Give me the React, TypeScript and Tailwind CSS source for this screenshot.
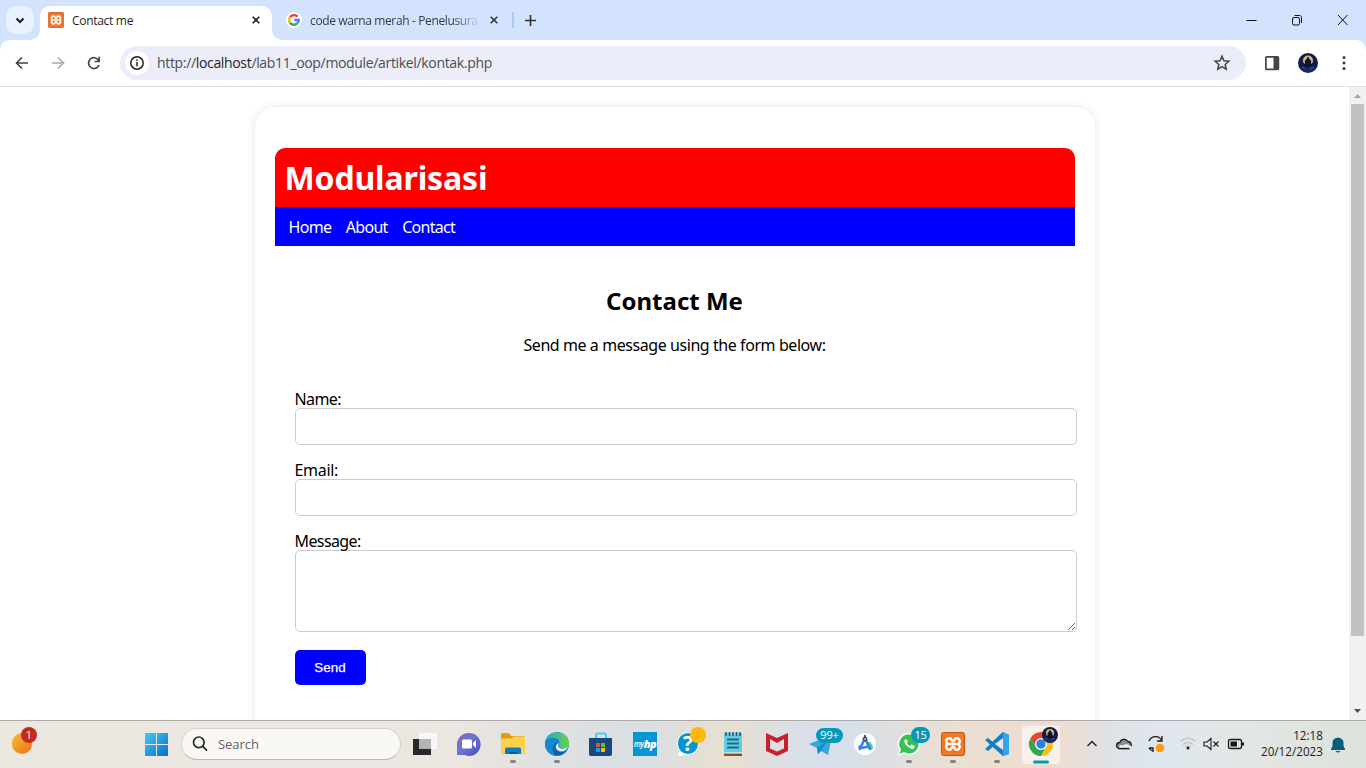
import React from "react";

type Children = { children?: React.ReactNode };

function XamppIcon({ className = "" }: { className?: string }) {
  return (
    <svg viewBox="0 0 24 24" className={className}>
      <rect x="0.5" y="0.5" width="23" height="23" rx="2" fill="#f37623" stroke="#b4551a" />
      <path d="M9.500 6.500a3 3 0 0 0-4.300 3c0 1.200.6 2 1.600 2.500-1 .5-1.600 1.300-1.600 2.500a3 3 0 0 0 4.300 3M14.500 6.500a3 3 0 0 1 4.300 3c0 1.200-.6 2-1.600 2.500 1 .5 1.600 1.300 1.600 2.500a3 3 0 0 1-4.300 3M8.500 12h7M9.500 6.500c1.300.6.8 2.700 2.500 2.700s1.200-2.100 2.500-2.700M9.500 17.500c1.300-.6.8-2.700 2.500-2.700s1.200 2.100 2.500 2.700" fill="none" stroke="#fff" strokeWidth="2.500" strokeLinecap="round" strokeLinejoin="round" />
    </svg>
  );
}

function Avatar({ className = "" }: { className?: string }) {
  return (
    <svg viewBox="0 0 20 20" className={className}>
      <circle cx="10" cy="10" r="10" fill="#111c4a" />
      <circle cx="10" cy="7.500" r="5" fill="#d8b982" />
      <path d="M8.500 6l1.500-2.500 1.500 2.500 1.800 2-.3 2 2.500 4h-11l2.500-4-.3-2 1.800-2z" fill="#0d1230" />
      <path d="M1.500 14l4-1.500 4 2.500 4-2 4.500 1.500a10 10 0 0 1-16 1z" fill="#17295f" />
      <path d="M4 14.500l3 .8m5 .5l4-1.200" stroke="#4d6aa6" strokeWidth=".7" />
    </svg>
  );
}

function GoogleIcon() {
  return (
    <svg viewBox="0 0 16 16" className="h-4 w-4">
      <circle cx="8" cy="8" r="8" fill="#fff" />
      <g fill="none" strokeWidth="2.400">
        <path d="M4 5.300A4.800 4.800 0 0 1 11.500 4.600" stroke="#ea4335" />
        <path d="M4 5.300a4.800 4.800 0 0 0 0 5.400" stroke="#fbbc05" />
        <path d="M4 10.700a4.800 4.800 0 0 0 7.200.7" stroke="#34a853" />
        <path d="M11.200 11.400A4.800 4.800 0 0 0 12.800 8H8.200" stroke="#4285f4" />
      </g>
    </svg>
  );
}

function Cross({ color = "#1f1f1f" }: { color?: string }) {
  return (
    <svg width="8" height="8" viewBox="0 0 8 8" className="shrink-0">
      <path d="M.7.7l6.600 6.600M7.300.7L.7 7.300" stroke={color} strokeWidth="1.600" />
    </svg>
  );
}

function TabStrip() {
  return (
    <div className="flex h-10 shrink-0 bg-[#d3e3fd]">
      <div className="flex w-10 justify-start pl-1.5 pt-1.5">
        <div className="flex h-7 w-7 items-center justify-center rounded-[10px] bg-[#e9f1fe]">
          <svg width="10" height="7" viewBox="0 0 10 7"><path d="M1.500 1.500L5 5l3.500-3.500" fill="none" stroke="#1f1f1f" strokeWidth="2" /></svg>
        </div>
      </div>
      <div className="relative mt-1.5 flex h-[34px] w-[232px] rounded-t-[10px] bg-white pb-1.5 pl-2">
        <svg className="absolute -left-2.5 bottom-0" width="10" height="10"><path d="M10 0v10H0A10 10 0 0 0 10 0" fill="#fff" /></svg>
        <svg className="absolute -right-2.5 bottom-0" width="10" height="10"><path d="M0 0v10h10A10 10 0 0 1 0 0" fill="#fff" /></svg>
        <div className="flex w-full items-center">
          <XamppIcon className="h-4 w-4" />
          <span className="ml-2 w-[180px] pt-0.5 text-[12px] tracking-[-0.3px] text-[#1f1f1f]">Contact me</span>
          <Cross />
        </div>
      </div>
      <div className="flex h-10 items-center pl-[14px]">
        <GoogleIcon />
        <span className="ml-2 w-[168px] whitespace-nowrap bg-linear-to-r from-[#303540] from-85% to-[#c3d2ea] bg-clip-text pt-0.5 text-[12px] tracking-[-0.36px] text-transparent">code warna merah - Penelusura</span>
        <span className="ml-3"><Cross color="#333" /></span>
        <span className="ml-[14px] h-4 w-0.5 bg-[#a8c7fa]" />
        <svg className="ml-[11px]" width="11" height="11" viewBox="0 0 11 11"><path d="M5.500 0v11M0 5.500h11" stroke="#303030" strokeWidth="1.600" /></svg>
      </div>
      <div className="ml-auto flex h-10 items-center pr-[18px]">
        <svg width="102" height="12" viewBox="0 0 102 12" fill="none" stroke="#111">
          <path d="M.5 6.500H10.500" strokeWidth="1" />
          <rect x="46.500" y="3.500" width="7" height="7.500" rx="1.500" />
          <path d="M48.500 1.500h5c1.400 0 2 .8 2 2v5.500" />
          <path d="M92 1l9.500 10M101.500 1L92 11" />
        </svg>
      </div>
    </div>
  );
}

function Toolbar() {
  return (
    <div className="bg-[#d3e3fd]">
      <div className="flex h-[46px] items-center rounded-t-[10px] bg-white">
        <svg width="120" height="46" viewBox="0 0 120 46" fill="none" strokeWidth="1.700">
          <path d="M28 23H17M22 17.500L16.500 23l5.500 5.500" stroke="#444" />
          <path d="M52 23h11M58 17.500l5.500 5.500-5.500 5.500" stroke="#aaa" />
          <path d="M98.500 20.200A5.400 5.400 0 1 0 99 25M99.200 16.800v4.700h-4.700" stroke="#444" />
        </svg>
        <div className="flex h-[34px] w-[1126px] items-center rounded-full bg-[#ebeef8] pl-[5px] pr-[15px]">
          <svg width="24" height="24" viewBox="0 0 24 24"><circle cx="12" cy="12" r="12" fill="#fff" /><circle cx="12" cy="12" r="6.200" fill="none" stroke="#222" strokeWidth="1.500" /><path d="M12 11v4.300M12 8.500v1.500" stroke="#222" strokeWidth="1.500" /></svg>
          <span className="ml-2 pb-px text-[14px] tracking-[-0.335px] text-[#4b4d52]">http://<span className="text-[#1f1f1f]">localhost</span>/lab11_oop/module/artikel/kontak.php</span>
          <svg className="ml-auto" width="18" height="18" viewBox="0 0 24 24"><path d="M12 3l2.600 6 6.600.6-5 4.300 1.500 6.400-5.700-3.400-5.700 3.400 1.500-6.400-5-4.300 6.600-.6z" fill="none" stroke="#444" strokeWidth="2" /></svg>
        </div>
        <svg className="ml-[18px]" width="16" height="16" viewBox="0 0 16 16"><rect x="1.900" y="1.900" width="12.500" height="12.500" rx="1" fill="none" stroke="#444" strokeWidth="1.700" /><path d="M9.500 2h5v12h-5z" fill="#444" /></svg>
        <Avatar className="ml-[18px] h-5 w-5" />
        <svg className="ml-[24px]" width="4" height="16" viewBox="0 0 4 16" fill="#444"><circle cx="2" cy="2.500" r="1.600" /><circle cx="2" cy="8" r="1.600" /><circle cx="2" cy="13.500" r="1.600" /></svg>
      </div>
      <div className="h-px bg-[#e0e0e2]" />
    </div>
  );
}

function ScrollBar() {
  return (
    <div className="flex w-[17px] flex-col items-center bg-[#f1f1f1]">
      <svg width="17" height="17" viewBox="0 0 17 17"><path d="M5 11l3.500-4 3.500 4z" fill="#a3a3a3" /></svg>
      <div className="h-[532px] w-[13px] bg-[#c1c1c1]" />
      <svg className="mt-auto" width="17" height="17" viewBox="0 0 17 17"><path d="M5 6l3.500 4L12 6z" fill="#505050" /></svg>
    </div>
  );
}

function Page() {
  const field = "block h-[37px] w-[782px] rounded-[5px] border border-[#ccc] bg-white px-2 outline-none";
  const label = "block h-[18px] text-[16px] leading-[18px] tracking-[-0.6px]";
  return (
    <div className="flex h-[633px] overflow-hidden bg-white">
      <div className="flex-1 overflow-hidden pt-5 font-['Noto_Sans','Open_Sans',sans-serif] text-black">
        <div className="mx-auto h-[800px] w-[840px] rounded-[20px] bg-white px-5 pt-[41px] shadow-[0_0_10px_rgba(0,0,0,0.1)]">
          <h1 className="h-[59px] rounded-t-[10px] bg-[red] px-2.5 pt-[10px] text-[32px] font-bold leading-[39px] tracking-[-0.15px] text-white">Modularisasi</h1>
          <nav className="flex h-[39px] items-center gap-[14.5px] bg-[blue] px-[14px] pt-0.5 text-[16px] leading-[19px] tracking-[-0.7px] text-white">
            <a>Home</a><a>About</a><a>Contact</a>
          </nav>
          <h2 className="mt-10 text-center text-[24px] font-bold leading-[29px]">Contact Me</h2>
          <p className="mt-[21px] text-center text-[16px] leading-[19px] tracking-[-0.43px]">Send me a message using the form below:</p>
          <form className="ml-5 mt-[35px]">
            <label className={label}>Name:</label>
            <input className={field} />
            <label className="mt-4 block h-[18px] text-[16px] leading-[18px] tracking-[-0.3px]">Email:</label>
            <input className={field} />
            <label className={label + " mt-4"}>Message:</label>
            <textarea className="block h-[82px] w-[782px] resize rounded-[5px] border border-[#ccc] p-2 outline-none" />
            <button type="button" className="mt-[18px] h-[35px] w-[71px] rounded-[5px] bg-[blue] font-['Liberation_Sans',sans-serif] text-[13.333px] tracking-[0.1px] text-white [-webkit-text-stroke:0.25px_white]">Send</button>
          </form>
        </div>
      </div>
      <ScrollBar />
    </div>
  );
}

function Cell({ running, children, badge }: Children & { running?: boolean; badge?: React.ReactNode }) {
  return (
    <div className="relative h-[47px] w-11 shrink-0">
      <svg width="44" height="47" viewBox="0 0 44 47" className="block">
        {children}
        {running && <rect x="20" y="39" width="6" height="3" rx="1.500" fill="#85827f" />}
      </svg>
      {badge}
    </div>
  );
}

function Apps() {
  return (
    <div className="ml-0.5 flex">
      <Cell><path d="M11 18h18v16H11z" fill="#292929" /><path d="M17 12h18v16H17z" fill="#f7f7f7" /><path d="M17 18h12v10H17z" fill="#b4b4b2" /></Cell>
      <Cell><path d="M22.500 12a11.500 11.500 0 1 1-4 22H11V23A11.500 11.500 0 0 1 22.500 12" fill="url(#chat)" /><rect x="16" y="18.500" width="10" height="9" rx="1.500" fill="#fff" /><path d="M27 22l3-3v8l-3-3z" fill="#fff" /></Cell>
      <Cell running><path d="M11 13.500q0-1.500 1.500-1.500h6l3 3H33q2 0 2 2v15.500H11z" fill="#dc9e12" /><path d="M11 17.500h10l3-2h11V33H11z" fill="#ffd04b" /><path d="M15 33v-4.500q0-2 2-2h12q2 0 2 2V33z" fill="#087cc8" /><path d="M19 33v-2h8v2z" fill="#045b9a" /></Cell>
      <Cell running>
        <circle cx="23" cy="23" r="12" fill="#1687d0" />
        <path d="M11.500 20C14 8.500 32 7.500 35 21c.8 5-3 7.500-8 6-2-.7-2.500-2-1.500-3.500C27 18 20 14 11.500 20" fill="url(#edge)" />
        <path d="M11 21c5-6 14-3.500 14 1.500-4-1-5.500 5-1.500 7.500 3 2 6.500 1.500 9-.2C27 38 11 36 11 21" fill="#155cae" />
        <path d="M11 21c5-5 12-4.500 14 .5-5-1-9 4.500-4 12.800C15 34 10.500 28 11 21" fill="#158ad2" />
        <path d="M25 22c-1.500 3-.5 5 2 5.500 2.500.6 5-.2 7-2-1 4-7 6.500-10.500 3.500-2.500-2-2-6 1.500-7" fill="#e9eced" />
      </Cell>
      <Cell><path d="M18 18v-4q0-1.500 1.500-1.500h7q1.500 0 1.500 1.500v4" fill="none" stroke="#50c9f5" strokeWidth="2" /><path d="M11 17h23v16q0 2-2 2H13q-2 0-2-2z" fill="#16477f" /><path d="M18 22h4v4h-4z" fill="#f25022" /><path d="M23 22h4v4h-4z" fill="#7fba00" /><path d="M18 27h4v4h-4z" fill="#00a4ef" /><path d="M23 27h4v4h-4z" fill="#ffb900" /></Cell>
      <Cell badge={<span className="absolute left-[11px] top-[11px] flex h-6 w-6 items-center justify-center bg-[#0795d4] font-['Open_Sans',sans-serif] text-[8px] font-semibold italic tracking-[-0.5px] text-white">my<b className="text-[11px]">hp</b></span>} />
      <Cell badge={<><span className="absolute left-[11px] top-[11px] flex h-[23px] w-[22px] items-center justify-center rounded-full border border-white bg-[#0795d4] text-[21px] font-bold leading-none text-white">?</span><span className="absolute left-6 top-[6px] h-4 w-4 rounded-full bg-[#ffb90d]" /></>}><path d="M12 35l2-7 7 6z" fill="#fff" /></Cell>
      <Cell><path d="M14 12h18v21H14z" fill="#65cce4" /><path d="M16 11v4m3.500-4v4m3.500-4v4m3.500-4v4m3.500-4v4" stroke="#185f7b" strokeWidth="1.500" /><path d="M17 18.500h12M17 22.500h12M17 26.500h12" stroke="#1a6e8b" strokeWidth="2" /><path d="M14 32h18v3H14z" fill="#954b13" /><path d="M14 31.500h18v1H14z" fill="#fff" /></Cell>
      <Cell><path d="M12 12l11 5 11-5v18l-11 5-11-5zM16 18v9.500l7 3 7-3V18l-7 4z" fill="#c8202f" fillRule="evenodd" /></Cell>
      <Cell badge={<span className="absolute left-[18px] top-[7px] flex h-[15px] w-[27px] items-center justify-center rounded-full bg-[#0698ba] text-[11px] tracking-[-0.2px] text-white">99+</span>}><path d="M11 23l23-9-4 20-7-4-3 3-1-6z" fill="#35a7df" /><path d="M19 27l10-7-6 10-3 3z" fill="#1688c2" /></Cell>
      <Cell><circle cx="23" cy="23" r="11" fill="#fff" /><path d="M24 21h4q3 2 3 7h-5z" fill="#3ddc84" /><path d="M17.500 29l5.500-12 5.500 12M16.500 25.500q6 3 11-1.500" fill="none" stroke="#397ef5" strokeWidth="2.600" /><circle cx="23" cy="18" r="2" fill="#8aa1b1" stroke="#263c4c" strokeWidth="1" /><path d="M23 14v3" stroke="#263c4c" strokeWidth="1.500" /></Cell>
      <Cell running badge={<span className="absolute left-[25px] top-[6px] flex h-4 w-[19px] items-center justify-center rounded-full bg-[#0698ba] text-[11px] tracking-[-0.4px] text-white">15</span>}><path d="M23 12a11 11 0 1 1-5 20.500L11.500 35l2-6A11 11 0 0 1 23 12" fill="#fff" /><path d="M23 13.500a9.500 9.500 0 1 1-5 17.500L13.500 33l1.500-4.500A9.500 9.500 0 0 1 23 13.500" fill="#37c351" /><path d="M19 18.500c-1.500 2 0 5 3.500 7.500 3 2.500 5 2.500 6 .5v-1.500l-3-1.400-1.500 1.400c-1.500-.5-2.500-1.500-3.200-3l1-1.200-1-2.300z" fill="#fff" /></Cell>
      <Cell running badge={<XamppIcon className="absolute left-[11px] top-[11px] h-6 w-6" />} />
      <Cell running><path d="M29 11l6 3v19l-6 2-13-12z" fill="#1b8dda" /><path d="M29 11v6l-15 13-3-2zM11 19l3-2 15 12v6z" fill="#167fc2" /><path d="M29 17v12l-8-6z" fill="#ece6e0" /><path d="M29 11l6 3v19l-6 2z" fill="#30a5ed" /></Cell>
      <Cell badge={<Avatar className="absolute left-6 top-[6px] h-4 w-4" />}>
        <rect x="4" y="4.500" width="38" height="38.500" rx="4" fill="#f8f0eb" />
        <path d="M12.600 17a12 12 0 0 1 20.800 0H23l-5.200 9z" fill="#e84434" />
        <path d="M12.600 17A12 12 0 0 0 23 35l5.200-9H17.800z" fill="#2da94f" />
        <path d="M33.400 17A12 12 0 0 1 23 35l5.200-9L23 17z" fill="#fdbd17" />
        <circle cx="23" cy="23" r="6" fill="#fff" /><circle cx="23" cy="23" r="4.700" fill="#2684e8" />
        <rect x="15" y="39.500" width="16" height="3" rx="1.500" fill="#0698ba" />
      </Cell>
    </div>
  );
}

function Tray() {
  return (
    <div className="ml-auto flex items-center">
      <svg width="176" height="47" viewBox="1074 721 176 47" fill="none" stroke="#1b1b1b" strokeWidth="1.300">
        <path d="M1087.500 746l4.500-4.500 4.500 4.500" />
        <path d="M1119 748.500c-3.500-1-3.200-6 .8-6 1.200-4 6-4.200 8-1 3.600 0 5 5 1.200 7z" fill="#8e8e8e" />
        <path d="M1120 749c-2-2 0-5 3-3.500 2-2 4.500-2 6 0 4-.5 3 3.500 0 3.500z" fill="#ececec" stroke="none" />
        <path d="M1118.500 748.500h11" />
        <path d="M1149 741a7 7 0 0 1 13 0m0-5v5h-5m-4 11v-4h-4m0 0a7 7 0 0 0 4 3" />
        <circle cx="1160" cy="748" r="4.300" fill="#ff9810" stroke="none" />
        <path d="M1180.500 741.500q7.500-6.500 15 0M1183 744.500q5-4 10 0M1185 747q3-2 6 0" stroke="#babdbe" strokeWidth="1.100" /><circle cx="1188" cy="748" r="1.500" fill="#222" stroke="none" />
        <path d="M1204 742h3l4-3.500v11l-4-3.500h-3z" strokeWidth="1.100" /><path d="M1213.500 741.500l5 5m0-5l-5 5" strokeWidth="1.100" />
        <rect x="1228.500" y="739.500" width="13" height="9" rx="2" /><path d="M1243 742.500v3" strokeWidth="2" /><path d="M1230.500 741.500h6.500v5h-6.500z" fill="#1b1b1b" stroke="none" />
      </svg>
      <div className="w-[73px] whitespace-nowrap pb-1 text-right text-[11.7px] leading-4 text-[#1c1c1c]"><div>12:18</div><div>20/12/2023</div></div>
      <svg className="ml-2 mr-[21px]" width="14" height="16" viewBox="0 0 14 16"><path d="M0 12l1.500-3V5.500C1.500-1 12.500-1 12.500 5.500V9l1.500 3v1H0zM4.500 14h5q-2.500 3-5 0" fill="#075e7c" /></svg>
    </div>
  );
}

function Taskbar() {
  return (
    <div className="flex h-12 shrink-0 items-start border-t border-[#aeaaa7] bg-[linear-gradient(90deg,#ece7df_0%,#ebe6df_34%,#e0e1e0_39%,#dadfe5_47%,#e8dfcf_53%,#dbdfe7_58%,#d6dfeb_62%,#eddfd3_70%,#efdcd0_77%,#dde3e9_82%,#e0e7ee_86%,#e2e7e5_91%,#dde2da_100%)]">
      <div className="relative h-[47px] w-[145px]">
        <span className="absolute left-3 top-3 h-[21px] w-5 rounded-full bg-linear-to-br from-[#efbd35] to-[#f16d0d]" />
        <span className="absolute left-[21px] top-[6px] flex h-4 w-4 items-center justify-center rounded-full bg-[#c42b1c] text-[11px] text-white">1</span>
      </div>
      <svg className="mt-3" width="23" height="23" viewBox="0 0 23 23"><defs><linearGradient id="win" x2="1" y2="1"><stop stopColor="#48c8f4" /><stop offset="1" stopColor="#0072ce" /></linearGradient><linearGradient id="chat" x2="1" y2="1"><stop stopColor="#9064b5" /><stop offset=".45" stopColor="#6b75d8" /><stop offset="1" stopColor="#5147be" /></linearGradient><linearGradient id="edge"><stop stopColor="#22a6d6" /><stop offset="1" stopColor="#69d13e" /></linearGradient></defs><path d="M0 0h11v11H0zM12 0h11v11H12zM0 12h11v11H0zM12 12h11v11H12z" fill="url(#win)" /></svg>
      <div className="ml-[13px] mt-[7px] flex h-8 w-[220px] items-center rounded-full border border-b-[#bcb6ad] border-[#d8d2ca] bg-[#faf8f5] pl-[10px]">
        <svg width="16" height="16" viewBox="0 0 16 16" fill="none" stroke="#292929" strokeWidth="1.700"><circle cx="6.800" cy="6.300" r="5.300" /><path d="M10.500 10.200l4.500 4.500" /></svg>
        <span className="ml-[10px] pt-px text-[13px] tracking-[-0.05px] text-[#646260]">Search</span>
      </div>
      <div className="-ml-px flex"><Apps /></div>
      <Tray />
    </div>
  );
}

export default function App() {
  return (
    <div className="flex h-[768px] w-[1366px] flex-col overflow-hidden bg-white font-['Open_Sans','Noto_Sans',sans-serif]">
      <TabStrip />
      <Toolbar />
      <Page />
      <Taskbar />
    </div>
  );
}
